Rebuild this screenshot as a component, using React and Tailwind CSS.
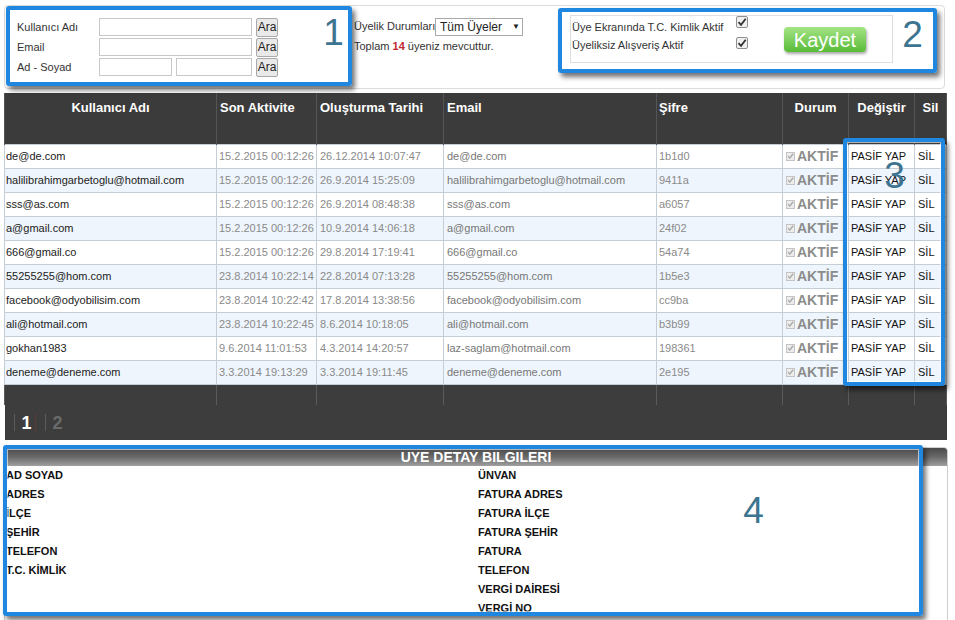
import React from "react";

const rows = [
  ["de@de.com", "15.2.2015 00:12:26", "26.12.2014 10:07:47", "de@de.com", "1b1d0"],
  ["halilibrahimgarbetoglu@hotmail.com", "15.2.2015 00:12:26", "26.9.2014 15:25:09", "halilibrahimgarbetoglu@hotmail.com", "9411a"],
  ["sss@as.com", "15.2.2015 00:12:26", "26.9.2014 08:48:38", "sss@as.com", "a6057"],
  ["a@gmail.com", "15.2.2015 00:12:26", "10.9.2014 14:06:18", "a@gmail.com", "24f02"],
  ["666@gmail.co", "15.2.2015 00:12:26", "29.8.2014 17:19:41", "666@gmail.co", "54a74"],
  ["55255255@hom.com", "23.8.2014 10:22:14", "22.8.2014 07:13:28", "55255255@hom.com", "1b5e3"],
  ["facebook@odyobilisim.com", "23.8.2014 10:22:42", "17.8.2014 13:38:56", "facebook@odyobilisim.com", "cc9ba"],
  ["ali@hotmail.com", "23.8.2014 10:22:45", "8.6.2014 10:18:05", "ali@hotmail.com", "b3b99"],
  ["gokhan1983", "9.6.2014 11:01:53", "4.3.2014 14:20:57", "laz-saglam@hotmail.com", "198361"],
  ["deneme@deneme.com", "3.3.2014 19:13:29", "3.3.2014 19:11:45", "deneme@deneme.com", "2e195"],
];

const leftLabels = ["AD SOYAD", "ADRES", "İLÇE", "ŞEHİR", "TELEFON", "T.C. KİMLİK"];
const rightLabels = ["ÜNVAN", "FATURA ADRES", "FATURA İLÇE", "FATURA ŞEHİR", "FATURA", "TELEFON", "VERGİ DAİRESİ", "VERGİ NO"];

function Check({ dim }) {
  return (
    <span
      className={
        dim
          ? "inline-flex w-[9px] h-[9px] border border-[#c4c4c4] bg-[#ececec] items-center justify-center shrink-0"
          : "inline-flex w-[12px] h-[12px] border border-[#8f8f8f] bg-[#f0f0f0] rounded-[2px] items-center justify-center shrink-0"
      }
    >
      <svg viewBox="0 0 10 10" className={dim ? "w-[8px] h-[8px]" : "w-[10px] h-[10px]"}>
        <path d="M1.5 5.2 L4 7.8 L8.7 1.8" fill="none" stroke={dim ? "#a8a8a8" : "#333"} strokeWidth="1.8" />
      </svg>
    </span>
  );
}

function AraBtn() {
  return (
    <button className="ml-[4px] w-[22px] h-[19px] border border-[#a9a9a9] bg-[#e9e9e9] text-[12px] leading-[17px] text-[#222] rounded-[2px] p-0">
      Ara
    </button>
  );
}

export default function App() {
  return (
    <div className="relative w-[955px] h-[620px] overflow-hidden bg-white font-['Liberation_Sans',Arial,sans-serif] text-[#333]">
      {/* top panel */}
      <div className="ml-[4px] mt-[5px] w-[941px] h-[84px] border border-[#dcdcdc] rounded-[4px] flex">
        <div className="ml-[12px] mt-[11px] w-[337px] text-[11px] text-[#333]">
          <div className="flex items-center h-[20px]">
            <span className="w-[82px]">Kullanıcı Adı</span>
            <span className="w-[153px] h-[18px] border border-[#c8c8c8] bg-white" />
            <AraBtn />
          </div>
          <div className="flex items-center h-[20px]">
            <span className="w-[82px]">Email</span>
            <span className="w-[153px] h-[18px] border border-[#c8c8c8] bg-white" />
            <AraBtn />
          </div>
          <div className="flex items-center h-[20px]">
            <span className="w-[82px]">Ad - Soyad</span>
            <span className="w-[73px] h-[18px] border border-[#c8c8c8] bg-white" />
            <span className="ml-[4px] w-[76px] h-[18px] border border-[#c8c8c8] bg-white" />
            <AraBtn />
          </div>
        </div>
        <div className="w-[216px] mt-[11px] text-[11px] text-[#333]">
          <div className="flex items-center h-[19px]">
            <span className="w-[81px] whitespace-nowrap">Üyelik Durumları</span>
            <span className="w-[88px] h-[18px] border border-[#a9a9a9] bg-white flex items-center pl-[4px] text-[12px] text-[#222]">
              Tüm Üyeler
              <span className="ml-[10px] text-[8px]">▼</span>
            </span>
          </div>
          <div className="h-[20px] flex items-center whitespace-nowrap">
            Toplam&nbsp;<span className="font-bold text-[#c0282d]">14</span>&nbsp;üyeniz mevcuttur.
          </div>
        </div>
        <div className="mt-[9px] w-[323px] h-[48px] border border-[#dedede] flex text-[11px] text-[#333]">
          <div className="pl-[1px] pt-[2px]">
            <div className="flex items-center h-[18px]">
              <span className="w-[164px] whitespace-nowrap">Üye Ekranında T.C. Kimlik Aktif</span>
              <span className="-mt-[8px]"><Check /></span>
            </div>
            <div className="flex items-center h-[18px]">
              <span className="w-[164px] whitespace-nowrap">Üyeliksiz Alışveriş Aktif</span>
              <span className="-mt-[2px]"><Check /></span>
            </div>
          </div>
          <div className="ml-[36px] mt-[11px] w-[82px] h-[25px] rounded-[4px] bg-linear-to-b from-[#a3e483] to-[#58bb36] shadow-[1px_2px_3px_rgba(0,0,0,0.35)] flex items-center justify-center text-white text-[20px] leading-none">
            Kaydet
          </div>
        </div>
      </div>

      {/* table */}
      <table className="ml-[4px] mt-[4px] w-[942px] table-fixed border-collapse text-[11px]">
        <colgroup>
          <col className="w-[212px]" />
          <col className="w-[100px]" />
          <col className="w-[127px]" />
          <col className="w-[213px]" />
          <col className="w-[126px]" />
          <col className="w-[66px]" />
          <col className="w-[66px]" />
          <col className="w-[32px]" />
        </colgroup>
        <thead>
          <tr className="bg-[#3b3b3b] text-white text-[13px] font-bold">
            <th className="h-[51px] align-top pt-[5px] text-center border-x border-[#555] font-bold">Kullanıcı Adı</th>
            <th className="align-top pt-[5px] text-left pl-[3px] border-x border-[#555] font-bold">Son Aktivite</th>
            <th className="align-top pt-[5px] text-left pl-[3px] border-x border-[#555] font-bold">Oluşturma Tarihi</th>
            <th className="align-top pt-[5px] text-left pl-[3px] border-x border-[#555] font-bold">Email</th>
            <th className="align-top pt-[5px] text-left pl-[2px] border-x border-[#555] font-bold">Şifre</th>
            <th className="align-top pt-[5px] text-center border-x border-[#555] font-bold">Durum</th>
            <th className="align-top pt-[5px] text-center border-x border-[#555] font-bold">Değiştir</th>
            <th className="align-top pt-[5px] text-center border-x border-[#555] font-bold">Sil</th>
          </tr>
        </thead>
        <tbody>
          {rows.map((r, i) => (
            <tr key={i} className={i % 2 === 0 ? "bg-white" : "bg-[#eef5fc]"}>
              <td className="h-[24px] border border-[#c5cdd6] pl-[1px] text-[#222] whitespace-nowrap overflow-hidden">{r[0]}</td>
              <td className="border border-[#c5cdd6] pl-[2px] text-[#8a8a8a] whitespace-nowrap overflow-hidden">{r[1]}</td>
              <td className="border border-[#c5cdd6] pl-[3px] text-[#8a8a8a] whitespace-nowrap overflow-hidden">{r[2]}</td>
              <td className="border border-[#c5cdd6] pl-[3px] text-[#777] whitespace-nowrap overflow-hidden">{r[3]}</td>
              <td className="border border-[#c5cdd6] pl-[2px] text-[#8a8a8a] whitespace-nowrap overflow-hidden">{r[4]}</td>
              <td className="border border-[#c5cdd6] pl-[3px] whitespace-nowrap overflow-hidden">
                <div className="flex items-start">
                  <span className="mt-[1px]"><Check dim /></span>
                  <span className="ml-[2px] text-[14px] font-bold text-[#8c8c8c] leading-[18px]">AKTİF</span>
                  <span className="ml-[4px] text-[12px] text-[#aaa] leading-[18px]">|</span>
                </div>
              </td>
              <td className="border border-[#c5cdd6] pl-[2px] text-[#111] whitespace-nowrap overflow-hidden">PASİF YAP</td>
              <td className="border border-[#c5cdd6] pl-[3px] text-[#111] whitespace-nowrap overflow-hidden">SİL</td>
            </tr>
          ))}
        </tbody>
        <tfoot>
          <tr className="bg-[#3d3d3d]">
            <td className="h-[21px] border-x border-[#5a5a5a]" />
            <td className="border-x border-[#5a5a5a]" />
            <td className="border-x border-[#5a5a5a]" />
            <td className="border-x border-[#5a5a5a]" />
            <td className="border-x border-[#5a5a5a]" />
            <td className="border-x border-[#5a5a5a]" />
            <td className="border-x border-[#5a5a5a]" />
            <td className="border-x border-[#5a5a5a]" />
          </tr>
          <tr className="bg-[#3d3d3d]">
            <td colSpan={8} className="h-[35px] p-0">
              <div className="flex items-center pl-[9px]">
                <span className="w-px h-[17px] bg-[#5c5c5c]" />
                <span className="ml-[7px] text-[18px] font-bold text-white leading-none">1</span>
                <span className="ml-[3px] w-px h-[17px] bg-[#5a3a3a]" />
                <span className="ml-[9px] w-px h-[17px] bg-[#5c5c5c]" />
                <span className="ml-[7px] text-[18px] font-bold text-[#6a6a6a] leading-none">2</span>
              </div>
            </td>
          </tr>
        </tfoot>
      </table>

      {/* detail panel */}
      <div className="ml-[4px] mt-[7px] w-[944px] h-[190px] border border-[#cfcfcf] rounded-[4px]">
        <div className="h-[18px] rounded-t-[3px] bg-linear-to-b from-[#4a4a4a] via-[#6a6a6a] to-[#a0a0a0] flex items-center justify-center text-white text-[14px] font-bold leading-none">
          UYE DETAY BILGILERI
        </div>
        <div className="grid grid-cols-2 text-[11px] font-bold text-[#111] leading-[19px]">
          <div className="pl-[1px]">
            {leftLabels.map((l) => (
              <div key={l}>{l}</div>
            ))}
          </div>
          <div className="pl-[2px]">
            {rightLabels.map((l) => (
              <div key={l}>{l}</div>
            ))}
          </div>
        </div>
      </div>

      {/* annotation overlays */}
      <div className="absolute left-[6px] top-[6px] w-[346px] h-[80px] border-[4px] border-[#1f87e0] rounded-[3px] shadow-[3px_4px_5px_rgba(0,0,0,0.55),inset_0_0_0_1px_rgba(255,255,255,0.6)]" />
      <div className="absolute left-[558px] top-[8px] w-[379px] h-[65px] border-[4px] border-[#1f87e0] rounded-[3px] shadow-[3px_4px_5px_rgba(0,0,0,0.55),inset_0_0_0_1px_rgba(255,255,255,0.6)]" />
      <div className="absolute left-[843px] top-[138px] w-[102px] h-[248px] border-[4px] border-[#1f87e0] rounded-[3px] shadow-[3px_4px_5px_rgba(0,0,0,0.55),inset_0_0_0_1px_rgba(255,255,255,0.6)]" />
      <div className="absolute left-[3px] top-[445px] w-[920px] h-[171px] border-[4px] border-[#1f87e0] rounded-[3px] shadow-[3px_4px_5px_rgba(0,0,0,0.55),inset_0_0_0_1px_rgba(255,255,255,0.6)]" />

      <div className="absolute left-[323px] top-[14px] w-[21px] text-center text-[37px] leading-none text-[#3d7490]">1</div>
      <div className="absolute left-[902px] top-[16px] w-[21px] text-center text-[37px] leading-none text-[#3d7490]">2</div>
      <div className="absolute left-[884px] top-[157px] w-[21px] text-center text-[37px] leading-none text-[#3d7490]">3</div>
      <div className="absolute left-[743px] top-[492px] w-[21px] text-center text-[37px] leading-none text-[#3d7490]">4</div>
    </div>
  );
}
